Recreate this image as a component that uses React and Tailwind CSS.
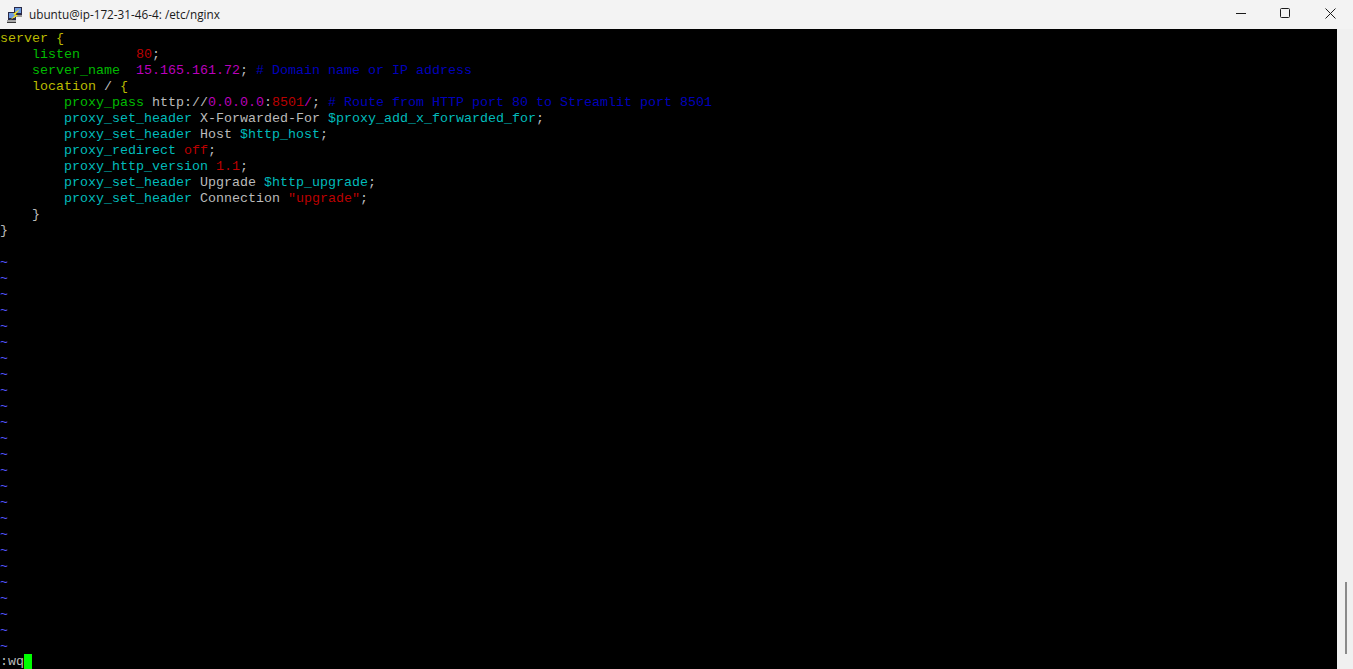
import React from 'react';

const yellow = 'text-[#bbbb00]';
const green = 'text-[#00bb00]';
const red = 'text-[#bb0000]';
const magenta = 'text-[#bb00bb]';
const blue = 'text-[#0000bb]';
const cyan = 'text-[#00bbbb]';
const grey = 'text-[#bbbbbb]';

// Each line of the vim buffer is a list of [text, colour] runs
const lines = [
  [['server {', yellow]],
  [['    ', grey], ['listen', green], ['       ', grey], ['80', red], [';', grey]],
  [['    ', grey], ['server_name', green], ['  ', grey], ['15.165.161.72', magenta], ['; ', grey], ['# Domain name or IP address', blue]],
  [['    ', grey], ['location', yellow], [' / ', grey], ['{', yellow]],
  [['        ', grey], ['proxy_pass', green], [' http://', grey], ['0.0.0.0', magenta], [':', grey], ['8501', red], ['/', magenta], ['; ', grey], ['# Route from HTTP port 80 to Streamlit port 8501', blue]],
  [['        ', grey], ['proxy_set_header', cyan], [' X-Forwarded-For ', grey], ['$proxy_add_x_forwarded_for', cyan], [';', grey]],
  [['        ', grey], ['proxy_set_header', cyan], [' Host ', grey], ['$http_host', cyan], [';', grey]],
  [['        ', grey], ['proxy_redirect', cyan], [' ', grey], ['off', red], [';', grey]],
  [['        ', grey], ['proxy_http_version', cyan], [' ', grey], ['1.1', red], [';', grey]],
  [['        ', grey], ['proxy_set_header', cyan], [' Upgrade ', grey], ['$http_upgrade', cyan], [';', grey]],
  [['        ', grey], ['proxy_set_header', cyan], [' Connection ', grey], ['"upgrade"', red], [';', grey]],
  [['    }', grey]],
  [['}', grey]],
  [[' ', grey]],
];

const tildes = Array.from({ length: 25 });

const PuttyIcon = () => (
  <svg width="16" height="16" viewBox="0 0 16 16" shapeRendering="crispEdges">
    {/* back computer */}
    <rect x="7" y="0" width="8" height="8" fill="#2a2a48" />
    <rect x="8" y="1" width="6" height="5" fill="#6f9ce0" />
    <rect x="9" y="8" width="6" height="2" fill="#9a9a9a" />
    {/* front computer */}
    <rect x="1" y="5" width="8" height="8" fill="#2a2a48" />
    <rect x="2" y="6" width="6" height="5" fill="#6f9ce0" />
    <rect x="0" y="13" width="9" height="2" fill="#a8a8a8" />
    <rect x="0" y="15" width="9" height="1" fill="#3a3a3a" />
    {/* bolt */}
    <polygon points="13,2 6,7 8.5,8 3,13 11,8.5 8.5,7.5" fill="#ffe81f" shapeRendering="auto" />
  </svg>
);

const App = () => {
  return (
    <div className="flex flex-col h-screen w-full overflow-hidden bg-[#f3f3f3]">
      {/* Title bar */}
      <div className="flex items-center justify-between h-[29px] shrink-0 bg-[#f3f3f3]">
        <div className="flex items-center gap-[6px] pl-[7px]">
          <PuttyIcon />
          <span className="font-['Open_Sans',sans-serif] text-[11.75px] text-[#1a1a1a]">ubuntu@ip-172-31-46-4: /etc/nginx</span>
        </div>
        <div className="flex h-full">
          <div className="flex items-center justify-center w-[45px] pb-[3px]">
            <svg width="10" height="10" viewBox="0 0 10 10">
              <path d="M0 5.5H10" stroke="#1a1a1a" strokeWidth="1" />
            </svg>
          </div>
          <div className="flex items-center justify-center w-[45px] pb-[3px] pr-px">
            <svg width="10" height="10" viewBox="0 0 10 10">
              <rect x="0.5" y="0.5" width="9" height="9" rx="1" fill="none" stroke="#1a1a1a" strokeWidth="1" />
            </svg>
          </div>
          <div className="flex items-center justify-center w-[45px] pb-[3px]">
            <svg width="11" height="11" viewBox="0 0 11 11">
              <path d="M0.5 0.5L10.5 10.5M10.5 0.5L0.5 10.5" stroke="#1a1a1a" strokeWidth="1" />
            </svg>
          </div>
        </div>
      </div>

      <div className="flex flex-1 min-h-0">
        {/* Terminal */}
        <div className="flex-1 bg-black pt-[2px] font-['Liberation_Mono',monospace] text-[13.33px] leading-[16px] whitespace-pre">
          {lines.map((runs, i) => (
            <div key={i} className="h-4">
              {runs.map(([text, color], j) => (
                <span key={j} className={color}>{text}</span>
              ))}
            </div>
          ))}
          {tildes.map((_, i) => (
            <div key={i} className="h-4 text-[#5555ff]">~</div>
          ))}
          {/* Command line sits a pixel higher, cursor touches the window edge */}
          <div className="flex h-[15px] -mt-px text-[#bbbbbb]">
            <span>:wq</span>
            <span className="w-2 h-[15px] bg-[#00ff00]" />
          </div>
        </div>

        {/* Scrollbar */}
        <div className="flex flex-col items-center justify-end w-4 pl-[2px] pb-[15px] bg-[#f0f0f0]">
          <div className="w-[2px] h-[72px] bg-[#8a8a8a]" />
        </div>
      </div>
    </div>
  );
};

export default App;
